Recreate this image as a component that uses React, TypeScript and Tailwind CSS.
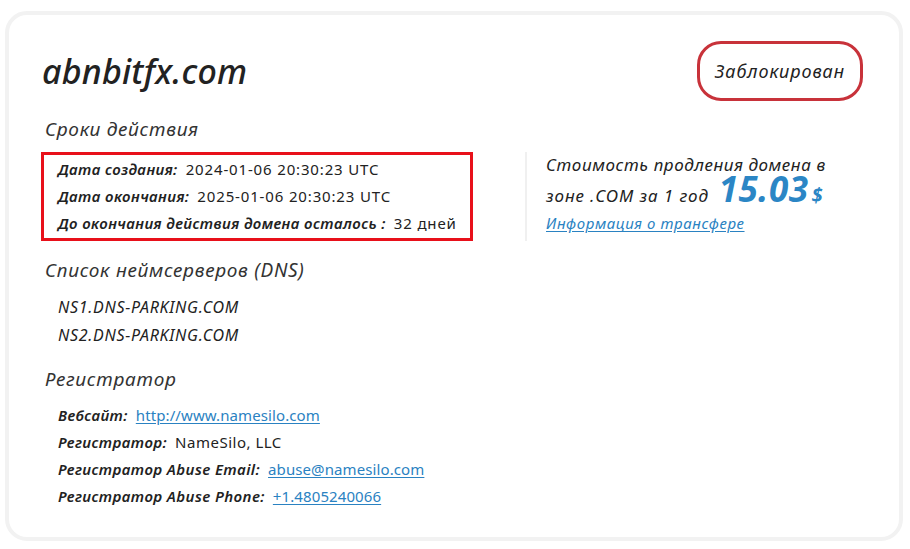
const rows = [
  { label: "Дата создания:", value: "2024-01-06 20:30:23 UTC" },
  { label: "Дата окончания:", value: "2025-01-06 20:30:23 UTC" },
  { label: "До окончания действия домена осталось :", value: "32 дней" },
];

const registrar = [
  { label: "Вебсайт:", value: "http://www.namesilo.com", link: true },
  { label: "Регистратор:", value: "NameSilo, LLC", link: false },
  { label: "Регистратор Abuse Email:", value: "abuse@namesilo.com", link: true },
  { label: "Регистратор Abuse Phone:", value: "+1.4805240066", link: true },
];

const Row = ({ label, value, link, wide }: { label: string; value: string; link?: boolean; wide?: boolean }) => (
  <div className="flex items-center h-[27px] text-[15px] text-[#222]">
    <span className="italic font-semibold tracking-[0.4px]">{label}</span>
    {link ? (
      <a href="#" className="ml-2 text-[#2a82c2] underline underline-offset-2 tracking-[0.1px]">{value}</a>
    ) : (
      <span className={wide ? "ml-2 tracking-[0.85px]" : "ml-2 tracking-[0.5px]"}>{value}</span>
    )}
  </div>
);

export default function App() {
  return (
    <div className="w-[910px] h-[549px] bg-white pt-[11px] pl-[5px]" style={{ fontFamily: '"Noto Sans", "Open Sans", sans-serif' }}>
      <div className="w-[898px] h-[530px] border-4 border-[#f2f2f2] rounded-[22px] pl-[33px] pr-[36px] pt-[26px]">
        {/* header */}
        <div className="flex items-center justify-between h-[60px]">
          <h1 className="italic font-medium text-[34px] leading-[40px] text-[#222] tracking-[0.2px]">abnbitfx.com</h1>
          <div className="w-[166px] h-[60px] rounded-[24px] border-[3px] border-[#c8323a] flex items-center justify-center italic text-[18px] tracking-[0.9px] text-[#222]">
            Заблокирован
          </div>
        </div>

        {/* validity */}
        <h2 className="mt-[16px] ml-[3px] italic text-[19px] leading-[24px] tracking-[0.7px] text-[#333]">Сроки действия</h2>
        <div className="mt-[11px] flex">
          <div className="-ml-[1px] w-[432px] h-[89px] border-[3px] border-[#e8101a] pl-[14px] py-[1px]">
            {rows.map((r) => (
              <Row key={r.label} label={r.label} value={r.value} wide />
            ))}
          </div>
          <div className="ml-[52px] border-l-2 border-[#f0f0f0] pl-[19px] italic text-[17px] tracking-[0.6px] text-[#222]">
            <div className="leading-[26px]">Стоимость продления домена в</div>
            <div className="leading-[36px]">
              <span className="tracking-[0.9px]">зоне .COM за 1 год</span>
              <span className="inline-block ml-[10px] text-[35px] leading-[22px] font-bold tracking-[0.5px] text-[#2b86c5]">15.03</span>
              <span className="inline-block ml-[3px] text-[20px] leading-[16px] font-bold text-[#2b86c5]">$</span>
            </div>
            <a href="#" className="block text-[15px] leading-[18px] text-[#2a82c2] underline underline-offset-2">
              Информация о трансфере
            </a>
          </div>
        </div>

        {/* dns */}
        <h2 className="mt-[17px] ml-[3px] italic text-[19px] leading-[24px] tracking-[0.7px] text-[#333]">Список неймсерверов (DNS)</h2>
        <div className="mt-[11px] pl-[16px] italic text-[16px] tracking-[0.7px] text-[#222]">
          <div className="h-[28px] leading-[28px]">NS1.DNS-PARKING.COM</div>
          <div className="h-[28px] leading-[28px]">NS2.DNS-PARKING.COM</div>
        </div>

        {/* registrar */}
        <h2 className="mt-[18px] ml-[3px] italic text-[19px] leading-[24px] tracking-[0.7px] text-[#333]">Регистратор</h2>
        <div className="mt-[11px] pl-[16px]">
          {registrar.map((r) => (
            <Row key={r.label} label={r.label} value={r.value} link={r.link} />
          ))}
        </div>
      </div>
    </div>
  );
}
